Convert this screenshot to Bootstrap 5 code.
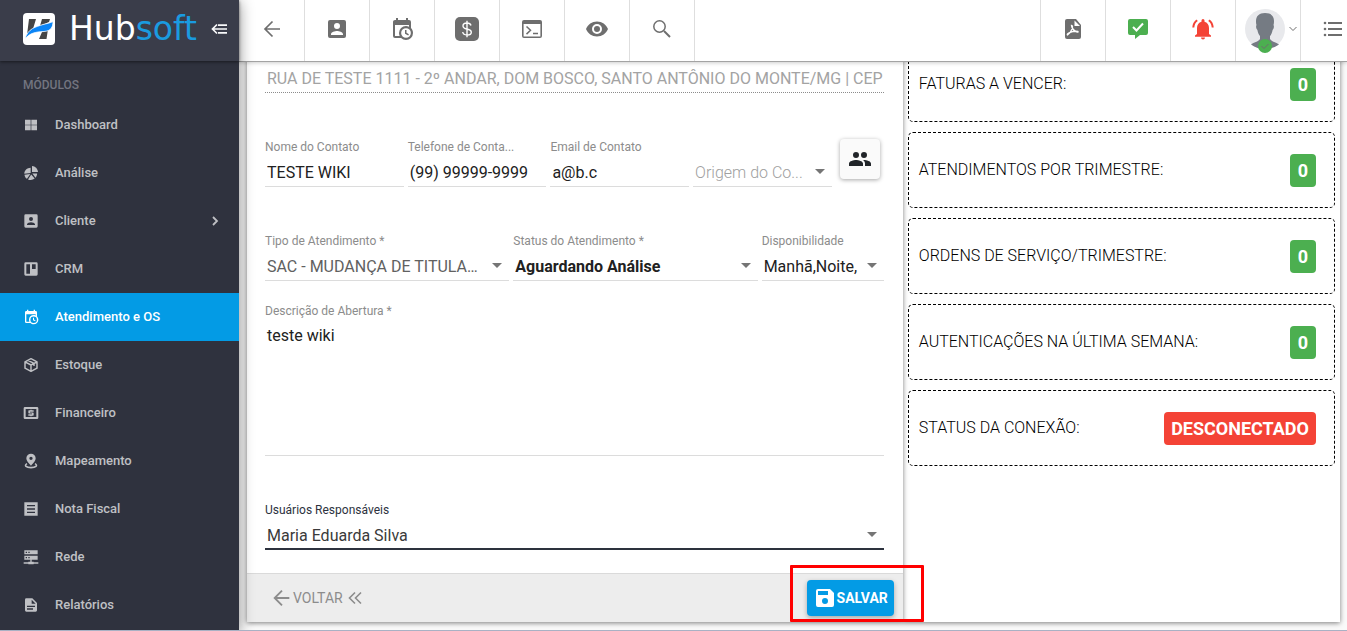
<!DOCTYPE html>
<html lang="pt-BR">
<head>
<meta charset="utf-8">
<meta name="viewport" content="width=device-width, initial-scale=1">
<title>Hubsoft - Atendimento e OS</title>
<link href="https://cdn.jsdelivr.net/npm/bootstrap@5.3.0/dist/css/bootstrap.min.css" rel="stylesheet">
<style>
  body { font-family: Roboto, "Open Sans", sans-serif; font-size: 16px; color: #212121; background: #fafafa; }
  svg { display: block; fill: currentColor; flex: none; }
  .ln { fill: none; stroke: currentColor; }
  .page-shell { border-bottom: 1px solid #a9b1c4; overflow: hidden; }
  .work-area { min-width: 0; }

  /* sidebar */
  .side-menu { width: 239px; background: #2f323e; box-shadow: 0 2px 14px rgba(0,0,0,.45); z-index: 5; }
  .side-top { height: 61px; background: #3a3d4a; box-shadow: 0 1px 3px rgba(0,0,0,.5); padding: 0 12px 4px 23px; color: #fff; }
  .brand-name { font: 400 33px/40px "DejaVu Sans", sans-serif; color: #fff; }
  .brand-name span { color: #1a9be0; }
  .side-title { font-size: 12px; font-weight: 500; line-height: 16px; color: #737580; padding: 16px 23px 8px; }
  .side-link { height: 48px; gap: 16px; padding: 0 20px 0 23px; font-size: 13px; font-weight: 500; color: #bfc0c4; text-decoration: none; }
  .side-link.current { background: #039be5; color: #fff; }

  /* top bar */
  .top-tools { height: 62px; background: #fff; border-bottom: 1px solid #a3a3a3; box-shadow: 0 1px 4px rgba(0,0,0,.2); z-index: 4; color: #6e6e6e; }
  .tool { width: 65px; padding: 0 0 3px; border: 0; background: none; color: inherit; display: flex; align-items: center; justify-content: center; }
  .tools-start { padding-left: 1px; }
  .tools-start .tool { border-right: 1px solid #dedede; }
  .tools-end .tool { border-left: 1px solid #dedede; }
  .tools-end .tool-last { width: 47px; justify-content: flex-end; padding-right: 2px; }
  .tools-end .tool-user { padding-left: 6px; }
  .bell { fill: #f44336; }
  .avatar-status { position: absolute; left: 13px; bottom: -4px; }

  /* panels, scrolled a little under the top bar */
  .panes { padding: 0 7px 8px 8px; margin-top: -16px; }
  .pane { background: #fff; box-shadow: 0 1px 5px rgba(0,0,0,.5); }
  .pane-form { width: 60%; z-index: 2; }
  .pane-info { width: 40%; padding: 0 5px; display: flex; flex-direction: column; gap: 10px; }
  .form-area { padding: 15px 19px 23px 18px; }
  .block-gap { margin-top: 46px; }
  .block-gap-sm { margin-top: 22px; }
  .fld { position: relative; min-width: 0; }
  .fld-wide { flex: 2 1 0; }
  .fld-slim { flex: 1 1 0; }
  .fld label { display: block; font-size: 12px; line-height: 16px; color: #8c8c8c; white-space: nowrap; }
  .ctl { display: block; width: 100%; height: 32px; border: 0; border-bottom: 1px solid #dcdcdc; border-radius: 0; background: none; padding: 4px 0 0 2px; font-size: 16px; line-height: 20px; color: #212121; outline: 0; appearance: none; }
  select.ctl { padding-right: 20px; }
  textarea.ctl { height: 137px; padding-top: 7px; resize: none; }
  .ctl-address { border-bottom: 1px dotted #8c8c8c; color: #a3a3a3; }
  .ctl-gray { color: #616161; }
  .ctl-hint { color: #a0a0a0; font-weight: 300; }
  .ctl-strong { font-weight: 700; }
  .pick::after { content: ""; position: absolute; right: 7px; bottom: 13px; border: 5px solid transparent; border-top-color: #757575; border-bottom: 0; }
  .fld.active label { color: #2d323e; }
  .fld.active .ctl { border-bottom: 2px solid #2d323e; padding-top: 5px; color: #3a3a3a; }
  .btn-people { width: 40px; height: 40px; margin: 0 4px; padding: 0; border-radius: 4px; background: #fafafa; box-shadow: 0 1px 4px rgba(0,0,0,.35); display: flex; align-items: center; justify-content: center; }
  .btn-people:hover { background: #f0f0f0; }
  .form-foot { height: 49px; background: #ededed; border-top: 1px solid #dadada; padding: 0 9px 0 24px; }
  .btn-back { border: 0; background: none; color: #8c8c8c; font-size: 14px; line-height: 20px; padding: 0; }
  .btn-save { height: 36px; padding: 0 6px; border: 0; border-radius: 4px; background: #039be5; color: #fff; font-size: 14px; font-weight: 700; box-shadow: 0 2px 5px rgba(0,0,0,.3); }
  .callout-frame { position: absolute; top: -15px; right: -30px; bottom: -6px; left: -17px; border: 3px solid #f00; border-radius: 1px; pointer-events: none; }
  .stat { height: 76px; border: 1px dashed #000; border-radius: 5px; padding: 0 18px 0 10px; font-weight: 300; color: #000; }
  .tag { border-radius: 4px; color: #fff; background: #4caf50; font-size: 18px; font-weight: 700; line-height: 33px; padding: 0 8px; }
  .tag-off { background: #f44336; padding: 0 7px; }
</style>
</head>
<body>
<div class="page-shell d-flex min-vh-100">

  <aside class="side-menu flex-shrink-0 position-relative">
    <div class="side-top d-flex align-items-center justify-content-between">
      <svg width="32" height="32" viewBox="0 0 32 32"><rect width="32" height="32" rx="4" fill="#fff"/><path d="M6 6h7l-3 10-6 6zM19 6h8l-1 3-9 4zM19 19l6-3-1.500 10H16z" fill="#454545"/><path d="M2 26C5 15 13 14 20 11.500c4-1 7-1.500 10-3C30 14 28 18 21 18.500 12 19 7 20 2 26z" fill="#0b84f5" stroke="#fff" stroke-width=".8"/></svg>
      <div class="brand-name">Hub<span>soft</span></div>
      <button class="btn p-0 border-0 text-light" type="button" aria-label="Recolher menu"><svg width="16" height="12" viewBox="0 0 16 12"><path class="ln" stroke-width="1.700" d="M6 1.500 1.500 6 6 10.500M2 6h14M7 2.200h9M7 9.800h9"/></svg></button>
    </div>
    <div class="side-title">MÓDULOS</div>
    <nav>
      <a class="side-link d-flex align-items-center" href="#"><svg width="16" height="16" viewBox="0 0 24 24"><path d="M3 4h8.500v7.500H3zM12.500 4H21v7.500h-8.500zM3 12.500h8.500V20H3zM12.500 12.500H21V20h-8.500z"/></svg>Dashboard</a>
      <a class="side-link d-flex align-items-center" href="#"><svg width="16" height="16" viewBox="0 0 24 24"><path d="M13.500 1.500V10.500H22.500c-.4-5-4-8.600-9-9zM11.500 4C6 4.300 2 8 2 13l9.500-1zM2.200 14.500C2.500 17 4 19.500 6 20.800l5-7.300zM12.300 14.200 7.500 21.600c3.500 1.500 7.500 1 10-1.200zM14 12.800l4.800 6.200c1.500-1.700 2.300-3.800 2.400-6.200z"/></svg>Análise</a>
      <a class="side-link d-flex align-items-center" href="#"><svg width="16" height="16" viewBox="0 0 24 24"><path d="M6 17c0-2 4-3.100 6-3.100s6 1.100 6 3.100v1H6m9-9a3 3 0 0 1-6 0 3 3 0 0 1 6 0M2 4v16a2 2 0 0 0 2 2h16a2 2 0 0 0 2-2V4a2 2 0 0 0-2-2H4a2 2 0 0 0-2 2z"/></svg>Cliente<svg class="ms-auto" width="8" height="10" viewBox="0 0 8 10"><path class="ln" stroke-width="1.800" d="m2 1 4 4-4 4"/></svg></a>
      <a class="side-link d-flex align-items-center" href="#"><svg width="16" height="16" viewBox="0 0 24 24"><path fill-rule="evenodd" d="M4 2h16a2 2 0 0 1 2 2v16a2 2 0 0 1-2 2H4a2 2 0 0 1-2-2V4a2 2 0 0 1 2-2zm1 3v14h5.500V5zm8.500 0v7H19V5z"/></svg>CRM</a>
      <a class="side-link current d-flex align-items-center" href="#" aria-current="page"><svg width="16" height="16" viewBox="0 0 24 24"><path d="M15 13h1.500v2.820l2.440 1.410-.75 1.300L15 16.690V13m4-5H5v11h4.670C9.240 18.090 9 17.070 9 16a7 7 0 0 1 7-7c1.070 0 2.090.24 3 .67V8M5 21a2 2 0 0 1-2-2V5c0-1.110.89-2 2-2h1V1h2v2h8V1h2v2h1a2 2 0 0 1 2 2v6.100c1.240 1.260 2 2.990 2 4.900a7 7 0 0 1-7 7c-1.910 0-3.640-.76-4.900-2H5m11-9.850A4.850 4.850 0 0 0 11.150 16 4.850 4.850 0 0 0 16 20.850 4.850 4.850 0 0 0 20.850 16 4.850 4.850 0 0 0 16 11.150z"/></svg>Atendimento e OS</a>
      <a class="side-link d-flex align-items-center" href="#"><svg width="16" height="16" viewBox="0 0 24 24"><path class="ln" stroke-width="2.200" stroke-linejoin="round" d="M12 2.500 21 7.300v9.400l-9 4.800-9-4.800V7.300zM3 7.300l9 4.700 9-4.700M12 12v9.500M7.500 5l9 4.700v3.800"/></svg>Estoque</a>
      <a class="side-link d-flex align-items-center" href="#"><svg width="16" height="16" viewBox="0 0 24 24"><path fill-rule="evenodd" d="M3 3h18a2 2 0 0 1 2 2v14a2 2 0 0 1-2 2H3a2 2 0 0 1-2-2V5a2 2 0 0 1 2-2zm1 3v12h16V6z"/><path d="M11 7h2v1h3v2.200h-5.500v1H15a1 1 0 0 1 1 1V15a1 1 0 0 1-1 1h-2v1h-2v-1H8v-2.200h5.500v-1H9a1 1 0 0 1-1-1V9a1 1 0 0 1 1-1h2z"/></svg>Financeiro</a>
      <a class="side-link d-flex align-items-center" href="#"><svg width="16" height="16" viewBox="0 0 24 24"><path fill-rule="evenodd" d="M12 1a7 7 0 0 1 7 7c0 4.500-7 11-7 11S5 12.500 5 8a7 7 0 0 1 7-7zm0 4.500a2.500 2.500 0 1 0 0 5 2.500 2.500 0 0 0 0-5z"/><path class="ln" stroke-width="2.400" d="M6 16c-5 3-1 6 6 6s11-3 6-6"/></svg>Mapeamento</a>
      <a class="side-link d-flex align-items-center" href="#"><svg width="16" height="16" viewBox="0 0 24 24"><path fill-rule="evenodd" d="M2 2h20v20H2zm4 4v2h12V6zm0 5v2h12v-2zm0 5v2h12v-2z"/></svg>Nota Fiscal</a>
      <a class="side-link d-flex align-items-center" href="#"><svg width="16" height="16" viewBox="0 0 24 24"><path fill-rule="evenodd" d="M2 2h20v6H2zm2 2v2h2V4zm4 0v2h2V4zM2 10h20v6H2zm2 2v2h2v-2zm4 0v2h2v-2zM11 16h2v3h3v1h7v2h-7v1H8v-1H1v-2h7v-1h3z"/></svg>Rede</a>
      <a class="side-link d-flex align-items-center" href="#"><svg width="16" height="16" viewBox="0 0 24 24"><path fill-rule="evenodd" d="M5 2h9l7 7v11a2 2 0 0 1-2 2H5a2 2 0 0 1-2-2V4a2 2 0 0 1 2-2zm8 2v6h6zM6 13v2h12v-2zm0 4v2h9v-2z"/></svg>Relatórios</a>
    </nav>
  </aside>

  <div class="work-area flex-grow-1 d-flex flex-column">
    <header class="top-tools position-relative d-flex justify-content-between">
      <div class="tools-start d-flex">
        <button class="tool" type="button" aria-label="Voltar"><svg width="24" height="24" viewBox="0 0 24 24"><path class="ln" stroke-width="1.700" d="M20 12H5M12.500 4.500 5 12l7.500 7.500"/></svg></button>
        <button class="tool" type="button" aria-label="Cliente"><svg width="24" height="24" viewBox="0 0 24 24"><path d="M6 17c0-2 4-3.100 6-3.100s6 1.100 6 3.100v1H6m9-9a3 3 0 0 1-6 0 3 3 0 0 1 6 0M3 5v14a2 2 0 0 0 2 2h14a2 2 0 0 0 2-2V5a2 2 0 0 0-2-2H5a2 2 0 0 0-2 2z"/></svg></button>
        <button class="tool" type="button" aria-label="Agenda"><svg width="24" height="24" viewBox="0 0 24 24"><path d="M15 13h1.500v2.820l2.440 1.410-.75 1.300L15 16.690V13m4-5H5v11h4.670C9.240 18.090 9 17.070 9 16a7 7 0 0 1 7-7c1.070 0 2.090.24 3 .67V8M5 21a2 2 0 0 1-2-2V5c0-1.110.89-2 2-2h1V1h2v2h8V1h2v2h1a2 2 0 0 1 2 2v6.100c1.240 1.260 2 2.990 2 4.900a7 7 0 0 1-7 7c-1.910 0-3.640-.76-4.900-2H5m11-9.850A4.850 4.850 0 0 0 11.150 16 4.850 4.850 0 0 0 16 20.850 4.850 4.850 0 0 0 20.850 16 4.850 4.850 0 0 0 16 11.150z"/></svg></button>
        <button class="tool" type="button" aria-label="Financeiro"><svg width="24" height="24" viewBox="0 0 24 24"><rect width="24" height="24" rx="5"/><path d="M16 8.500C15.600 7 14 6 12 6S8 7 8 8.900 9.500 11.400 12 12s4.300 1.200 4.300 3.200S14.500 18 12 18s-4-1.200-4.300-3M12 3.800v16.400" fill="none" stroke="#fff" stroke-width="1.400"/></svg></button>
        <button class="tool" type="button" aria-label="Terminal"><svg width="24" height="24" viewBox="0 0 24 24"><path fill-rule="evenodd" d="M4 3h16a2 2 0 0 1 2 2v14a2 2 0 0 1-2 2H4a2 2 0 0 1-2-2V5a2 2 0 0 1 2-2zm-.4 4v12.400h16.800V7z"/><path class="ln" stroke-width="1.500" d="m6.500 9.500 4 3.800-4 3.800M13 16.500h5"/></svg></button>
        <button class="tool" type="button" aria-label="Visualizar"><svg width="24" height="24" viewBox="0 0 24 24"><path d="M12 9a3 3 0 0 0 0 6 3 3 0 0 0 0-6m0 8a5 5 0 0 1 0-10 5 5 0 0 1 0 10m0-12.500C7 4.500 2.730 7.610 1 12c1.730 4.390 6 7.500 11 7.500s9.270-3.110 11-7.500c-1.730-4.390-6-7.500-11-7.500z"/></svg></button>
        <button class="tool" type="button" aria-label="Pesquisar"><svg width="24" height="24" viewBox="0 0 24 24"><g class="ln"><circle cx="9.500" cy="9.500" r="5.700" stroke-width="1.500"/><path stroke-width="2" d="m14 14 6 6"/></g></svg></button>
      </div>
      <div class="tools-end d-flex">
        <button class="tool" type="button" aria-label="PDF"><svg width="24" height="24" viewBox="0 0 24 24"><path d="M6 2h9l5 6v12a2 2 0 0 1-2 2H6a2 2 0 0 1-2-2V4a2 2 0 0 1 2-2z"/><path d="M13.500 3.500V9H19z" fill="#fff"/><path d="M10.500 8.500c2.500 0 0 7-4 9.500-1.500-1.500 5-4.500 10.500-3.500 1 1.800-6-.5-6.500-6z" fill="none" stroke="#fff" stroke-width="1.300"/></svg></button>
        <button class="tool" type="button" aria-label="Mensagens"><svg width="24" height="24" viewBox="0 0 24 24"><path fill="#4caf50" d="M4 2h16a2 2 0 0 1 2 2v12a2 2 0 0 1-2 2h-6l-5 4v-4H4a2 2 0 0 1-2-2V4a2 2 0 0 1 2-2z"/><path d="m7 10 3.500 3.500L17 6.500" fill="none" stroke="#fff" stroke-width="2"/></svg></button>
        <button class="tool" type="button" aria-label="Notificações"><svg class="bell" width="24" height="24" viewBox="0 0 24 24"><path d="M20 18.500v1.300H4v-1.300L6 17v-6c0-3.300 1.700-5.500 4.500-6.200V3.500a1.500 1.500 0 0 1 3 0v1.300C16.300 5.500 18 7.700 18 11v6zM14 20.600a2 2 0 0 1-4 0M18.600 2.500l-1.400 1.400A8.500 8.500 0 0 1 20.700 10.500h2C22.500 7 21 4.300 18.600 2.500M1.300 10.500h2A8.500 8.500 0 0 1 6.800 3.900L5.400 2.500a10.500 10.500 0 0 0-4.100 8z"/></svg></button>
        <button class="tool tool-user" type="button" aria-label="Perfil">
          <span class="position-relative"><svg width="40" height="40" viewBox="0 0 40 40"><circle cx="20" cy="20" r="20" fill="#e8e9ec"/><path fill="#757b83" d="M20 4c6 0 9 3 9 8 0 2-.2 3-.5 4 .8 1 .4 4-.9 5-.5 3-1.600 5-2.600 6v3c2 3 6 3 9 5.500C30 38.500 25 40 20 40S10 38.500 6 35.500C9 33 13 33 15 30v-3c-1-1-2.100-3-2.600-6-1.300-1-1.700-4-.9-5-.3-1-.5-2-.5-4 0-5 3-8 9-8z"/></svg><svg class="avatar-status" width="14" height="14" viewBox="0 0 14 14"><circle cx="7" cy="7" r="7" fill="#4caf50"/><path class="ln" d="m3.500 7 2.500 2.500L10.500 5"/></svg></span>
          <svg class="ms-1" width="8" height="6" viewBox="0 0 8 6"><path class="ln" d="m.5 1 3.500 3.500L7.500 1"/></svg>
        </button>
        <button class="tool tool-last" type="button" aria-label="Opções"><svg width="24" height="24" viewBox="0 0 24 24"><path class="ln" stroke-width="1.800" d="M7 6h14M7 12h14M7 18h14"/><circle cx="4" cy="6" r="1.300"/><circle cx="4" cy="12" r="1.300"/><circle cx="4" cy="18" r="1.300"/></svg></button>
      </div>
    </header>

    <main class="panes d-flex">
      <form class="pane pane-form position-relative" onsubmit="return false">
        <div class="form-area">
          <input class="ctl ctl-address" type="text" aria-label="Endereço" readonly value="RUA DE TESTE 1111 - 2º ANDAR, DOM BOSCO, SANTO ANTÔNIO DO MONTE/MG | CEP">

          <div class="d-flex gap-1 block-gap">
            <div class="fld col"><label for="nome">Nome do Contato</label><input class="ctl" id="nome" type="text" value="TESTE WIKI"></div>
            <div class="fld col"><label for="fone">Telefone de Conta...</label><input class="ctl" id="fone" type="text" value="(99) 99999-9999"></div>
            <div class="fld col"><label for="email">Email de Contato</label><input class="ctl" id="email" type="text" value="a@b.c"></div>
            <div class="fld col pick align-self-end"><select class="ctl ctl-hint" aria-label="Origem do Contato"><option>Origem do Co...</option></select></div>
            <button class="btn btn-people" type="button" aria-label="Contatos"><svg width="24" height="24" viewBox="0 0 24 24"><path d="M16 11a3 3 0 1 0 0-6 3 3 0 0 0 0 6zm-8 0a3 3 0 1 0 0-6 3 3 0 0 0 0 6zm0 2c-2.330 0-7 1.170-7 3.500V19h14v-2.500C15 14.170 10.330 13 8 13zm8 0c-.29 0-.62.02-.97.050C16.190 13.890 17 15.020 17 16.500V19h6v-2.500c0-2.330-4.670-3.500-7-3.500z"/></svg></button>
          </div>

          <div class="d-flex gap-1 block-gap">
            <div class="fld fld-wide pick"><label for="tipo">Tipo de Atendimento *</label><select class="ctl ctl-gray" id="tipo"><option>SAC - MUDANÇA DE TITULA…</option></select></div>
            <div class="fld fld-wide pick"><label for="status">Status do Atendimento *</label><select class="ctl ctl-strong" id="status"><option>Aguardando Análise</option></select></div>
            <div class="fld fld-slim pick"><label for="disp">Disponibilidade</label><select class="ctl" id="disp"><option>Manhã,Noite,</option></select></div>
          </div>

          <div class="fld block-gap-sm"><label for="desc">Descrição de Abertura *</label><textarea class="ctl" id="desc">teste wiki</textarea></div>

          <div class="fld pick active block-gap"><label for="resp">Usuários Responsáveis</label><select class="ctl" id="resp"><option>Maria Eduarda Silva</option></select></div>
        </div>

        <div class="form-foot d-flex align-items-center justify-content-between">
          <button class="btn-back d-flex align-items-center" type="button"><svg width="22" height="22" viewBox="0 0 24 24"><path class="ln" stroke-width="2" d="M20 12H4M12 4l-8 8 8 8"/></svg>VOLTAR<svg class="ms-1" width="16" height="16" viewBox="0 0 16 16"><path class="ln" stroke-width="1.600" d="M8 2.500 2.500 8 8 13.500M14 2.500 8.500 8l5.500 5.500"/></svg></button>
          <div class="position-relative">
            <button class="btn-save d-flex align-items-center" type="submit"><svg width="24" height="24" viewBox="0 0 24 24"><path fill-rule="evenodd" d="M5 3h12l4 4v12a2 2 0 0 1-2 2H5a2 2 0 0 1-2-2V5a2 2 0 0 1 2-2zm0 2v4h10V5zm7 7a3 3 0 1 0 0 6 3 3 0 0 0 0-6z"/></svg>SALVAR</button>
            <div class="callout-frame"></div>
          </div>
        </div>
      </form>

      <section class="pane pane-info">
        <div class="stat d-flex align-items-center justify-content-between"><span>FATURAS A VENCER:</span><span class="tag">0</span></div>
        <div class="stat d-flex align-items-center justify-content-between"><span>ATENDIMENTOS POR TRIMESTRE:</span><span class="tag">0</span></div>
        <div class="stat d-flex align-items-center justify-content-between"><span>ORDENS DE SERVIÇO/TRIMESTRE:</span><span class="tag">0</span></div>
        <div class="stat d-flex align-items-center justify-content-between"><span>AUTENTICAÇÕES NA ÚLTIMA SEMANA:</span><span class="tag">0</span></div>
        <div class="stat d-flex align-items-center justify-content-between"><span>STATUS DA CONEXÃO:</span><span class="tag tag-off">DESCONECTADO</span></div>
      </section>
    </main>
  </div>
</div>
<script src="https://cdn.jsdelivr.net/npm/bootstrap@5.3.0/dist/js/bootstrap.bundle.min.js"></script>
</body>
</html>
